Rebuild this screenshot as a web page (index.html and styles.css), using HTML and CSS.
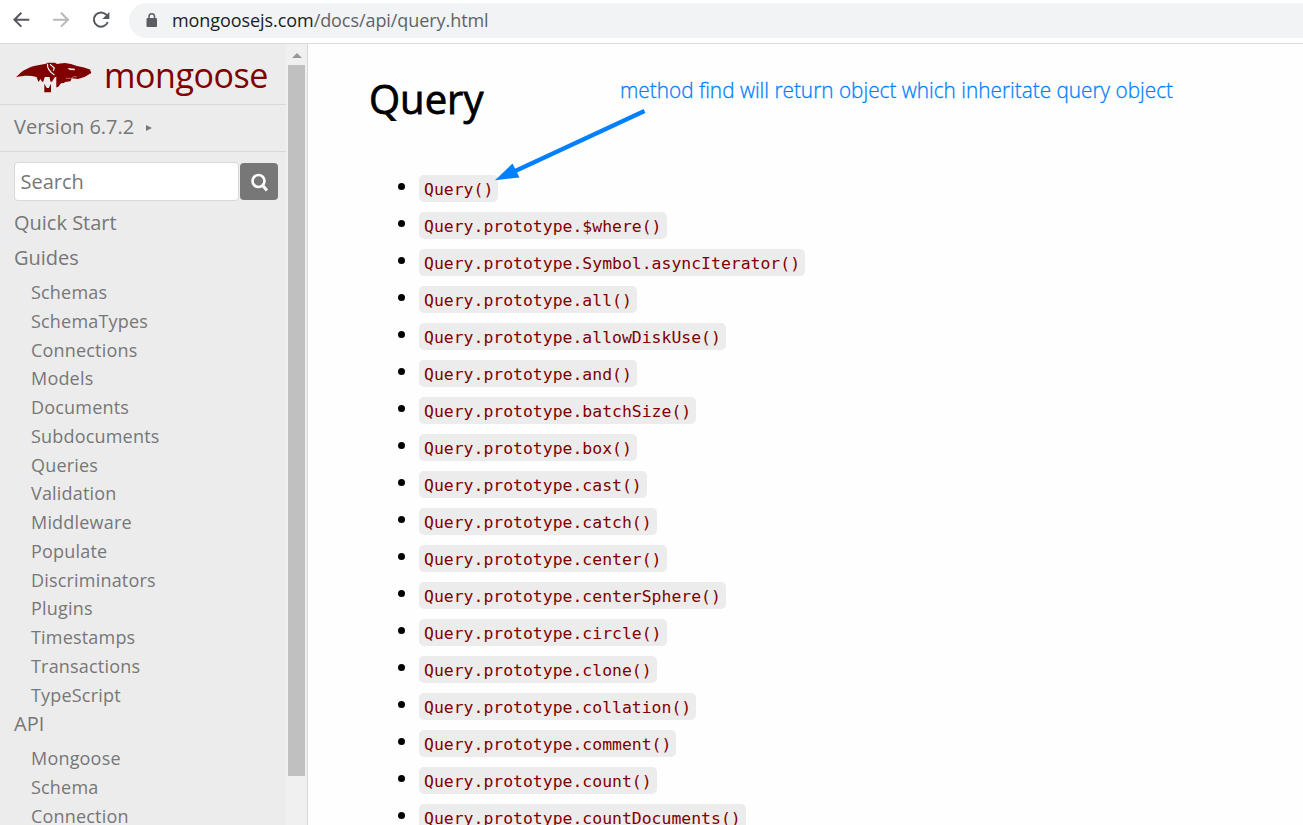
FILE: index.html
```html
<!DOCTYPE html>
<html lang="en">
<head>
<meta charset="utf-8">
<title>Mongoose v6.7.2: Query</title>
<link rel="stylesheet" href="styles.css">
</head>
<body>
<header class="toolbar">
  <svg class="nav-icons" width="130" height="42" viewBox="0 0 130 42" fill="none" stroke-width="2">
    <path d="M29.500 19.700H15M21.500 12.700L14.500 19.700l7 7" stroke="#55585d"/>
    <path d="M53.500 19.700H68M61.500 12.700l7 7-7 7" stroke="#b6b8ba"/>
    <path d="M107.600 15.200A7.200 7.200 0 1 0 108.600 22" stroke="#55585d"/>
    <path d="M110.200 12v7h-7z" fill="#55585d"/>
  </svg>
  <div class="omnibox">
    <svg class="lock" width="12" height="15" viewBox="0 0 12 15"><rect x=".5" y="5" width="10.500" height="9" rx="1" fill="#5a5d62"/><path d="M3 6V3.500a2.750 2.750 0 0 1 5.500 0V6" fill="none" stroke="#5a5d62" stroke-width="1.500"/></svg>
    <span class="url">mongoosejs.com<span class="path">/docs/api/query.html</span></span>
  </div>
</header>
<div class="page">
  <aside class="sidebar">
    <div class="menu">
      <div class="brand">
        <svg class="logo" width="76" height="32" viewBox="0 0 76 32">
          <path fill="#800000" d="M0 16.300C4 12 7 9.500 10.700 8 14 6 17 5 20.700 4.500L30 2.800 31.300 1.800 39 1.800 41 3 44 2.500 49 2 55 3 61 5 68 6.500 74 8.500 75.300 12 69 15.700 62 18 55.700 17.300 54.500 20.300 49 21 48 22 45 22.300 42.300 25.700 40.300 26.500V15.700L38.700 16.300 36 20.700H34.500L33.500 16H28.700L27.300 20.700H26L24.500 18 22.500 21 20.500 16C14 14.200 7 14.700 0 16.300Z"/>
          <path d="M31.500 2.800C31 7 33 10.500 38.500 14M34 3.200L38.300 7 37.300 9.800" fill="none" stroke="#ececec" stroke-width="1.200"/>
          <path fill="#ececec" d="M51.300 7l7.500.7v1.600l-5-.3z"/>
          <path fill="#800000" d="M28.300 22.700l2.500 4.300 2-.1 2.200-4.200v8.600h-6.700z"/>
          <path d="M50 17.300h5.500l1.500-1.500h4" fill="none" stroke="#c99" stroke-width=".7"/>
        </svg>
        <span class="name">mongoose</span>
      </div>
      <div class="version">Version 6.7.2<i class="caret"></i></div>
      <div class="search">
        <div class="field">Search</div>
        <div class="button"><svg width="20" height="20" viewBox="0 0 20 20" fill="none" stroke="#fff" stroke-width="2.600"><circle cx="8.500" cy="9" r="6"/><path d="M12.700 13.500l4.300 5" stroke-width="3"/></svg></div>
      </div>
      <nav>
        <div class="item">Quick Start</div>
        <div class="item">Guides</div>
        <ul class="sub">
          <li>Schemas</li><li>SchemaTypes</li><li>Connections</li><li>Models</li><li>Documents</li>
          <li>Subdocuments</li><li>Queries</li><li>Validation</li><li>Middleware</li><li>Populate</li>
          <li>Discriminators</li><li>Plugins</li><li>Timestamps</li><li>Transactions</li><li>TypeScript</li>
        </ul>
        <div class="item">API</div>
        <ul class="sub"><li>Mongoose</li><li>Schema</li><li>Connection</li></ul>
      </nav>
    </div>
    <div class="scrollbar"><i class="up"></i><div class="thumb"></div></div>
  </aside>
  <main class="content">
    <h1>Query</h1>
    <ul class="methods">
      <li><code>Query()</code></li>
      <li><code>Query.prototype.$where()</code></li>
      <li><code>Query.prototype.Symbol.asyncIterator()</code></li>
      <li><code>Query.prototype.all()</code></li>
      <li><code>Query.prototype.allowDiskUse()</code></li>
      <li><code>Query.prototype.and()</code></li>
      <li><code>Query.prototype.batchSize()</code></li>
      <li><code>Query.prototype.box()</code></li>
      <li><code>Query.prototype.cast()</code></li>
      <li><code>Query.prototype.catch()</code></li>
      <li><code>Query.prototype.center()</code></li>
      <li><code>Query.prototype.centerSphere()</code></li>
      <li><code>Query.prototype.circle()</code></li>
      <li><code>Query.prototype.clone()</code></li>
      <li><code>Query.prototype.collation()</code></li>
      <li><code>Query.prototype.comment()</code></li>
      <li><code>Query.prototype.count()</code></li>
      <li><code>Query.prototype.countDocuments()</code></li>
    </ul>
  </main>
</div>
<svg class="annotation" width="700" height="120" viewBox="490 70 700 120">
  <path d="M644.500 111L512 172.500" stroke="#0080ff" stroke-width="4.200"/>
  <path d="M495 180.300L512.500 163.500 519.500 177.500Z" fill="#0080ff"/>
  <text x="620" y="98" textLength="553" lengthAdjust="spacingAndGlyphs">method find will return object which inheritate query object</text>
</svg>
</body>
</html>
```
FILE: styles.css
```css
* { box-sizing: border-box; }
body {
  margin: 0;
  height: 825px;
  overflow: hidden;
  display: flex;
  flex-direction: column;
  position: relative;
  background: #fefefe;
  font-family: "Open Sans", sans-serif;
}
ul { list-style: none; margin: 0; padding: 0; }
.toolbar {
  height: 44px;
  flex: none;
  display: flex;
  background: #fff;
  border-bottom: 1px solid #d9dadb;
}
.nav-icons { flex: none; width: 129px; }
.omnibox {
  flex: 1;
  height: 35px;
  margin-top: 3px;
  padding-left: 17px;
  display: flex;
  align-items: center;
  background: #f1f3f4;
  border-radius: 18px 0 0 18px;
}
.url { margin: -2px 0 0 14px; font-size: 18px; letter-spacing: -.07px; color: #202124; white-space: nowrap; }
.path { color: #5f6368; }
.page { flex: 1; min-height: 0; display: flex; }
.sidebar {
  width: 308px;
  flex: none;
  display: flex;
  overflow: hidden;
  background: #f0f0f0;
  border-right: 1px solid #d8d8d8;
}
.menu { width: 286px; flex: none; background: #ececec; color: #777; }
.brand {
  height: 61px;
  padding-left: 16px;
  display: flex;
  align-items: center;
  border-bottom: 1px solid #d8d8d8;
}
.logo { margin-top: 6px; }
.name { margin: 2px 0 0 12px; font-size: 34px; letter-spacing: -.45px; line-height: 58px; color: #800000; }
.version {
  height: 47px;
  padding: 0 0 4px 14px;
  display: flex;
  align-items: center;
  font-size: 20px;
  border-bottom: 1px solid #d8d8d8;
}
.caret {
  margin: 4px 0 0 12px;
  border-left: 6px solid #777;
  border-top: 3px solid transparent;
  border-bottom: 3px solid transparent;
}
.search { display: flex; gap: 1px; padding: 10px 0 5px 14px; }
.field {
  width: 225px;
  height: 39px;
  padding-left: 5.500px;
  font-size: 20px;
  line-height: 37px;
  background: #fff;
  border: 1px solid #d8d8d8;
  border-radius: 4px;
}
.button {
  width: 38px;
  height: 37px;
  margin-top: 1px;
  padding: 9px 0 0 10px;
  background: #777;
  border-radius: 4px;
}
.button svg { display: block; }
.item { height: 34.600px; padding-left: 14px; font-size: 20px; line-height: 34.600px; }
.sub { margin: 2.850px 0 -2.850px; padding-left: 31px; font-size: 18px; letter-spacing: .19px; line-height: 28.770px; }
.scrollbar { width: 21px; padding: 9px 2px 0; display: flex; flex-direction: column; align-items: center; }
.up {
  border-bottom: 5px solid #999;
  border-left: 5px solid transparent;
  border-right: 5px solid transparent;
}
.thumb { width: 17px; height: 711px; margin-top: 7px; background: #c0c0c0; }
.content { flex: 1; padding: 25px 0 0 61px; }
h1 { margin: 0; font-size: 40px; font-weight: 500; line-height: 60px; color: #000; -webkit-text-stroke: .8px #000; }
.methods { margin-top: 41px; padding-left: 29px; }
.methods li { height: 37px; display: flex; align-items: center; }
.methods li::before {
  content: "";
  width: 7px;
  height: 7px;
  margin: -4px 14px 0 0;
  border-radius: 50%;
  background: #000;
}
code {
  height: 27px;
  padding: 1px 5px 0;
  font: 16.450px/27px "DejaVu Sans Mono", monospace;
  color: #800000;
  background: #ececec;
  border-radius: 5px;
}
.annotation { position: absolute; left: 490px; top: 70px; }
.annotation text { font: 300 22px "Open Sans", sans-serif; fill: #0080ff; stroke: #0080ff; stroke-width: .3px; }
```
